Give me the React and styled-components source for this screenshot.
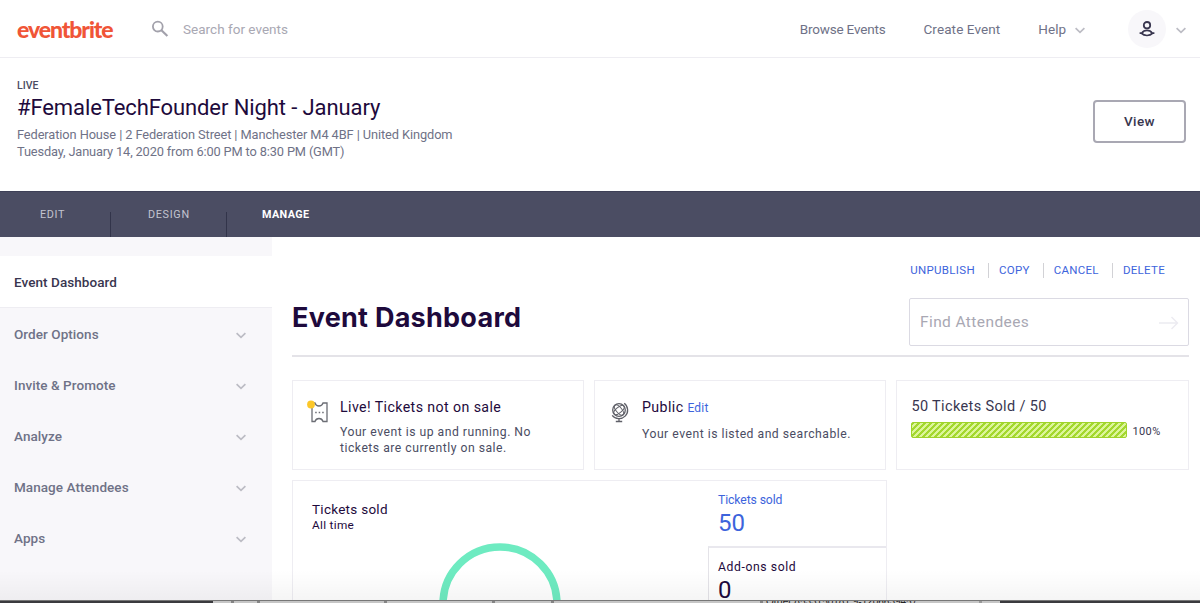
import React from "react";
import styled, { createGlobalStyle } from "styled-components";

const GlobalStyle = createGlobalStyle`
  * {
    box-sizing: border-box;
  }
  body {
    margin: 0;
    background: #fff;
    overflow: hidden;
    font-family: Roboto, "Liberation Sans", sans-serif;
    color: #1e0a3c;
  }
  h1, h2, h3, p {
    margin: 0;
    font-weight: 400;
  }
  a {
    color: inherit;
    text-decoration: none;
  }
`;

const Page = styled.div`
  height: 603px;
  display: flex;
  flex-direction: column;
  overflow: hidden;
`;

const Screen = styled.div`
  position: relative;
  height: 600px;
  overflow: hidden;
`;

const BottomShade = styled.div`
  position: absolute;
  left: 0;
  right: 0;
  bottom: 0;
  height: 30px;
  background: linear-gradient(rgba(0, 0, 0, 0), rgba(0, 0, 0, 0.04));
`;

const TopBar = styled.header`
  height: 58px;
  padding: 0 14px 0 17px;
  display: flex;
  align-items: center;
  border-bottom: 1px solid #eeedf2;
`;

const Logo = styled.a`
  width: 96px;
  font-family: Lato, sans-serif;
  font-size: 23px;
  line-height: 26px;
  font-weight: 900;
  letter-spacing: -1.1px;
  color: #f05537;
`;

const SearchBox = styled.div`
  margin-left: 38px;
  flex: 1;
  display: flex;
  align-items: center;
  gap: 14px;
  font-size: 13.5px;
  letter-spacing: 0.02px;
  color: #a9a8b3;
`;

const TopLink = styled.a`
  display: flex;
  align-items: center;
  gap: 9px;
  margin-left: 38px;
  font-size: 13.5px;
  letter-spacing: ${(props) => props.$spacing || 0}px;
  color: #6f7287;
`;

const Avatar = styled.div`
  width: 38px;
  height: 38px;
  margin: 0 10px 0 43px;
  border-radius: 50%;
  background: #f8f7fa;
  display: flex;
  align-items: center;
  justify-content: center;
`;

const EventHeader = styled.section`
  height: 133px;
  padding: 20px 14px 0 17px;
  display: flex;
  justify-content: space-between;
`;

const Status = styled.p`
  font-size: 10.5px;
  line-height: 15px;
  font-weight: 500;
  color: #4b4d63;
`;

const EventTitle = styled.h2`
  font-size: 22px;
  line-height: 30px;
  letter-spacing: -0.1px;
  color: #1e0a3c;
`;

const EventInfo = styled.p`
  font-size: 12.8px;
  line-height: 17.5px;
  letter-spacing: ${(props) => props.$spacing || 0}px;
  color: #6f7287;
`;

const EventText = styled.div`
  ${EventTitle} {
    margin: 0 0 2.5px;
  }
`;

const ViewButton = styled.button`
  width: 93px;
  height: 43px;
  margin-top: 22px;
  padding: 0 0 2px;
  border: 2px solid #a9a8b3;
  border-radius: 4px;
  background: #fff;
  font-family: inherit;
  font-size: 13.5px;
  font-weight: 500;
  letter-spacing: 0.4px;
  color: #39364f;
`;

const NavBar = styled.nav`
  height: 46px;
  display: flex;
  background: #4b4d63;
  border-top: 1px solid #3e4057;
`;

const NavItem = styled.a`
  width: ${(props) => props.$width}px;
  padding: ${(props) => `0 0 0 ${props.$left}px`};
  font-size: 10.8px;
  line-height: 46px;
  font-weight: ${(props) => (props.$active ? 700 : 400)};
  letter-spacing: ${(props) => (props.$active ? 0.4 : 0.7)}px;
  color: ${(props) => (props.$active ? "#fff" : "#c3c4d0")};
  background: ${(props) =>
    props.$active
      ? "none"
      : "linear-gradient(#32344a, #32344a) right bottom / 1px 25px no-repeat"};
`;

const Body = styled.div`
  height: 363px;
  display: flex;
`;

const Sidebar = styled.aside`
  width: 272px;
  padding-top: 19px;
  background: #f8f7fa;
`;

const SideItem = styled.a`
  height: ${(props) => (props.$active ? 52 : 51)}px;
  padding: 0 26px 0 14px;
  display: flex;
  align-items: center;
  justify-content: space-between;
  font-size: 13.5px;
  font-weight: 500;
  letter-spacing: 0.06px;
  color: ${(props) => (props.$active ? "#39364f" : "#6f7287")};
  background: ${(props) => (props.$active ? "#fff" : "none")};
  border-bottom: ${(props) => (props.$active ? "1px solid #eeedf2" : "none")};
`;

const Main = styled.main`
  width: 897px;
  margin-left: 20px;
  padding-top: 26px;
`;

const Actions = styled.div`
  display: flex;
  justify-content: flex-end;
  padding-right: 24px;
`;

const Action = styled.a`
  padding-left: 10px;
  margin-left: 13px;
  border-left: ${(props) => (props.$first ? "none" : "1px solid #d2d2d6")};
  font-size: 11.5px;
  line-height: 15px;
  letter-spacing: 0.3px;
  color: #3d64dc;
`;

const TitleRow = styled.div`
  margin-top: 20px;
  height: 59px;
  display: flex;
  justify-content: space-between;
  border-bottom: 2px solid #e4e3e8;
`;

const Title = styled.h1`
  font-family: Inter, Roboto, sans-serif;
  font-size: 27px;
  line-height: 39px;
  font-weight: 700;
  letter-spacing: 0.27px;
  color: #1e0a3c;
`;

const FindBox = styled.div`
  width: 280px;
  height: 48px;
  padding: 0 9px 0 10px;
  display: flex;
  align-items: center;
  justify-content: space-between;
  border: 1px solid #dbdae3;
  border-radius: 2px;
  font-size: 15.5px;
  letter-spacing: 0.4px;
  color: #a9a8b3;
`;

const Cards = styled.div`
  margin-top: 23px;
  display: grid;
  grid-template-columns: 292px 292.4px 292.4px;
  column-gap: 10px;
`;

const Card = styled.section`
  height: 90px;
  padding: 17px 14px;
  display: flex;
  align-items: flex-start;
  border: 1px solid #eeedf2;
  svg {
    flex: none;
    margin-top: 2px;
  }
`;

const CardText = styled.div`
  margin-left: 11px;
`;

const CardTitle = styled.h3`
  font-size: 14.2px;
  line-height: 18px;
  letter-spacing: 0.4px;
  color: #1e0a3c;
  a {
    font-size: 12px;
    letter-spacing: 0.2px;
    color: #3d64dc;
  }
`;

const CardCopy = styled.p`
  margin-top: ${(props) => props.$top || 9}px;
  font-size: 12.2px;
  line-height: 15.5px;
  letter-spacing: 0.5px;
  white-space: nowrap;
  color: #4b4d63;
`;

const Sold = styled.div`
  color: #39364f;
  h3 {
    font-size: 14.5px;
    line-height: 17px;
    letter-spacing: 0.36px;
  }
`;

const Progress = styled.div`
  margin-top: 7px;
  display: flex;
  align-items: center;
  gap: 5px;
  font-size: 11px;
  letter-spacing: 0.4px;
  span {
    padding-top: 3px;
  }
`;

const Bar = styled.div`
  width: 216px;
  height: 16px;
  border: 1px solid #9fd32b;
  border-radius: 2px;
  background: repeating-linear-gradient(
    135deg,
    #a3d82f 0 2.1px,
    #dcf59b 2.1px 4.24px
  );
`;

const Report = styled.section`
  width: 595px;
  height: 130px;
  margin-top: 10px;
  display: flex;
  border: 1px solid #eeedf2;
`;

const Chart = styled.div`
  width: 415px;
  padding: 19px 0 0 19px;
  svg {
    display: block;
    margin: 11px 0 0 127px;
  }
`;

const ChartTitle = styled.h3`
  font-size: 13.5px;
  line-height: 18px;
  letter-spacing: 0.27px;
`;

const ChartSub = styled.p`
  font-size: 11.8px;
  line-height: 14px;
  letter-spacing: 0.3px;
`;

const Stats = styled.div`
  flex: 1;
`;

const Stat = styled.div`
  height: ${(props) => (props.$active ? 65 : 63)}px;
  padding: 11px 0 0 9px;
  border-left: 1px solid ${(props) => (props.$active ? "#fff" : "#e4e3e8")};
  border-top: ${(props) => (props.$active ? "none" : "2px solid #e9e8ee")};
  color: ${(props) => (props.$active ? "#3d64dc" : "#1e0a3c")};
  p {
    font-size: 12.2px;
    line-height: 16px;
    letter-spacing: ${(props) => (props.$active ? -0.1 : 0.6)}px;
  }
  strong {
    display: block;
    font-size: 24px;
    line-height: 30px;
    font-weight: 400;
  }
`;

// sliver of the window that sits behind the page
const BehindWindow = styled.div`
  height: 3px;
  display: flex;
  overflow: hidden;
  background: #3a3a3e;
  border-top: 1px solid #777;
`;

const BehindCells = styled.div`
  width: 787px;
  margin-left: 213px;
  display: flex;
  background: #c6c6c6;
`;

const BehindCell = styled.div`
  flex: none;
  width: ${(props) => props.$width}px;
  border-right: 3px solid #858585;
`;

const BehindText = styled.div`
  flex: none;
  width: 219px;
  height: 2px;
  padding-left: 3px;
  border-right: 3px solid #999;
  font: 10px/10px "Liberation Sans", sans-serif;
  letter-spacing: 0;
  color: #222;
  white-space: nowrap;
  span {
    display: block;
    margin-top: -4px;
  }
`;

const ChevronSvg = styled.svg`
  margin-top: 3px;
`;

const Chevron = () => (
  <ChevronSvg width="10" height="7" viewBox="0 0 10 7" fill="none">
    <path d="M0.600 1.200L5 5.400l4.400-4.200" stroke="#bcbcc4" strokeWidth="1.700" />
  </ChevronSvg>
);

const SearchIcon = () => (
  <svg width="18" height="18" viewBox="0 0 18 18" fill="none">
    <circle cx="6.8" cy="6.6" r="4.9" stroke="#a2a1ab" strokeWidth="1.8" />
    <path d="M10.4 10.2l6 5.8" stroke="#a2a1ab" strokeWidth="2.2" />
  </svg>
);

const UserIcon = () => (
  <svg width="18" height="18" viewBox="0 0 18 18" fill="none" stroke="#39364f">
    <circle cx="9" cy="5.2" r="3.2" strokeWidth="1.8" />
    <path
      d="M1.600 13.200h2.200c1.200-1.900 3-2.800 5.200-2.800s4 .9 5.200 2.800h2.200M3.600 13.400c1.400 1.500 3.200 2.100 5.400 2.100s4-.6 5.400-2.100"
      strokeWidth="1.700"
    />
  </svg>
);

const ArrowIcon = () => (
  <svg width="20" height="16" viewBox="0 0 20 16" fill="none">
    <path d="M0 9h18M12.500 3l6 6-6 6" stroke="#ecebf1" strokeWidth="1.400" />
  </svg>
);

const TicketIcon = () => (
  <svg width="22" height="24" viewBox="0 0 22 24" fill="none">
    <path
      d="M5 3h3c.6 2 1.800 3 4 3s3.400-1 4-3h4v18.500h-4c-.6-2-1.800-3-4-3s-3.400 1-4 3H5z"
      stroke="#6b6d74"
      strokeWidth="1.300"
    />
    <path d="M8.200 12.500h9" stroke="#6b6d74" strokeWidth="1.500" strokeDasharray="1.500 2" />
    <circle cx="4" cy="4.500" r="3.900" fill="#fcc729" />
  </svg>
);

const GlobeIcon = () => (
  <svg width="22" height="24" viewBox="0 0 22 24" fill="none" stroke="#5f6068">
    <circle cx="10" cy="10" r="6.300" strokeWidth="1.300" />
    <ellipse cx="10" cy="10" rx="2.800" ry="6.300" transform="rotate(-40 10 10)" />
    <ellipse cx="10" cy="10" rx="2.800" ry="6.300" transform="rotate(50 10 10)" />
    <path d="M15.200 3.200A8.600 8.600 0 1 1 3.200 15.300M10 18.500V21.500M6.800 21.500h6.400" strokeWidth="1.300" />
  </svg>
);

const sideItems = [
  "Order Options",
  "Invite & Promote",
  "Analyze",
  "Manage Attendees",
  "Apps",
];

export default function App() {
  return (
    <Page>
      <GlobalStyle />
      <Screen>
        <TopBar>
          <Logo href="#">eventbrite</Logo>
          <SearchBox>
            <SearchIcon />
            <span>Search for events</span>
          </SearchBox>
          <TopLink href="#" $spacing={-0.18}>Browse Events</TopLink>
          <TopLink href="#" $spacing={0.1}>Create Event</TopLink>
          <TopLink href="#">
            Help <Chevron />
          </TopLink>
          <Avatar>
            <UserIcon />
          </Avatar>
          <Chevron />
        </TopBar>

        <EventHeader>
          <EventText>
            <Status>LIVE</Status>
            <EventTitle>#FemaleTechFounder Night - January</EventTitle>
            <EventInfo $spacing={-0.09}>
              Federation House | 2 Federation Street | Manchester M4 4BF | United
              Kingdom
            </EventInfo>
            <EventInfo $spacing={-0.14}>
              Tuesday, January 14, 2020 from 6:00 PM to 8:30 PM (GMT)
            </EventInfo>
          </EventText>
          <ViewButton>View</ViewButton>
        </EventHeader>

        <NavBar>
          <NavItem href="#" $width={111} $left={40}>EDIT</NavItem>
          <NavItem href="#" $width={116} $left={37}>DESIGN</NavItem>
          <NavItem href="#" $width={116} $left={35} $active>MANAGE</NavItem>
        </NavBar>

        <Body>
          <Sidebar>
            <SideItem href="#" $active>Event Dashboard</SideItem>
            {sideItems.map((item) => (
              <SideItem href="#" key={item}>
                {item}
                <Chevron />
              </SideItem>
            ))}
          </Sidebar>

          <Main>
            <Actions>
              <Action href="#" $first>UNPUBLISH</Action>
              <Action href="#">COPY</Action>
              <Action href="#">CANCEL</Action>
              <Action href="#">DELETE</Action>
            </Actions>
            <TitleRow>
              <Title>Event Dashboard</Title>
              <FindBox>
                Find Attendees
                <ArrowIcon />
              </FindBox>
            </TitleRow>

            <Cards>
              <Card>
                <TicketIcon />
                <CardText>
                  <CardTitle>Live! Tickets not on sale</CardTitle>
                  <CardCopy>
                    Your event is up and running. No
                    <br />
                    tickets are currently on sale.
                  </CardCopy>
                </CardText>
              </Card>
              <Card>
                <GlobeIcon />
                <CardText>
                  <CardTitle>
                    Public <a href="#">Edit</a>
                  </CardTitle>
                  <CardCopy $top={10}>Your event is listed and searchable.</CardCopy>
                </CardText>
              </Card>
              <Card>
                <Sold>
                  <h3>50 Tickets Sold / 50</h3>
                  <Progress>
                    <Bar />
                    <span>100%</span>
                  </Progress>
                </Sold>
              </Card>
            </Cards>

            <Report>
              <Chart>
                <ChartTitle>Tickets sold</ChartTitle>
                <ChartSub>All time</ChartSub>
                <svg width="122" height="122" viewBox="0 0 122 122" fill="none">
                  <circle cx="61" cy="61" r="57" stroke="#6eebc1" strokeWidth="7.500" />
                </svg>
              </Chart>
              <Stats>
                <Stat $active>
                  <p>Tickets sold</p>
                  <strong>50</strong>
                </Stat>
                <Stat>
                  <p>Add-ons sold</p>
                  <strong>0</strong>
                </Stat>
              </Stats>
            </Report>
          </Main>
        </Body>
        <BottomShade />
      </Screen>
      <BehindWindow>
        <BehindCells>
          <BehindCell $width={21} />
          <BehindCell $width={26} />
          <BehindCell $width={127} />
          <BehindCell $width={108} />
          <BehindCell $width={59} />
          <BehindCell $width={209} />
          <BehindText>
            <span>Order 8533150181 9-1206639457</span>
          </BehindText>
        </BehindCells>
      </BehindWindow>
    </Page>
  );
}
